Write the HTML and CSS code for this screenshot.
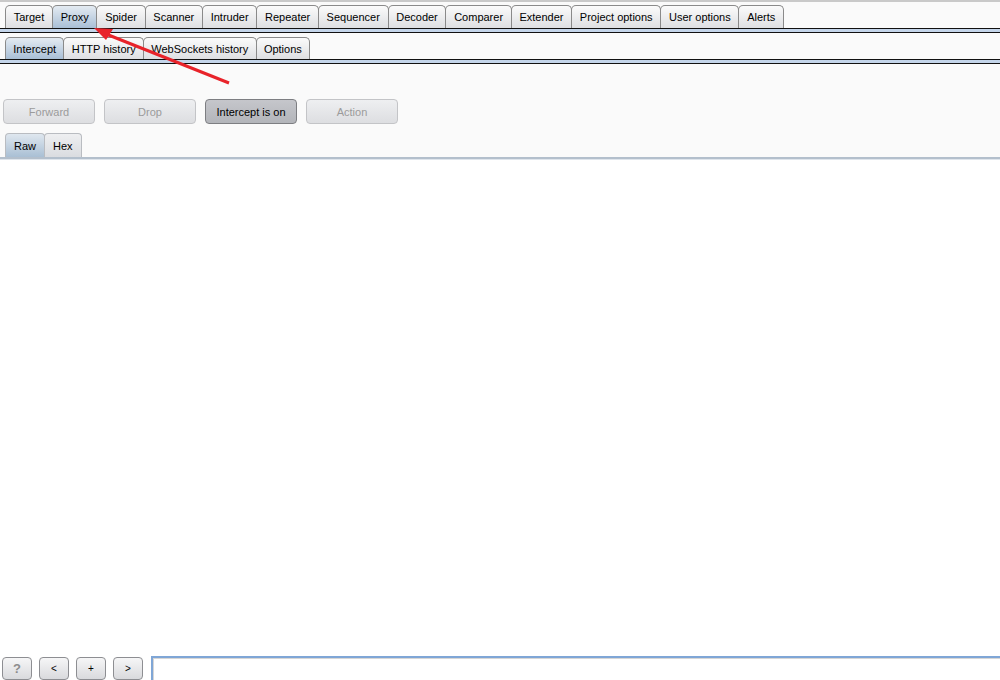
FILE: index.html
```html
<!DOCTYPE html>
<html lang="en">
<head>
  <meta charset="UTF-8" />
  <title>Burp Suite - Proxy</title>
  <link rel="stylesheet" href="styles.css">
</head>
<body>

<div class="window">
  <!-- Main tool tabs -->
  <div class="tabs main-tabs">
    <a class="tab">Target</a>
    <a class="tab active">Proxy</a>
    <a class="tab">Spider</a>
    <a class="tab">Scanner</a>
    <a class="tab">Intruder</a>
    <a class="tab">Repeater</a>
    <a class="tab">Sequencer</a>
    <a class="tab">Decoder</a>
    <a class="tab">Comparer</a>
    <a class="tab">Extender</a>
    <a class="tab">Project options</a>
    <a class="tab">User options</a>
    <a class="tab">Alerts</a>
  </div>
  <div class="tab-rule"></div>

  <!-- Proxy sub tabs -->
  <div class="tabs sub-tabs">
    <a class="tab active">Intercept</a>
    <a class="tab">HTTP history</a>
    <a class="tab">WebSockets history</a>
    <a class="tab">Options</a>
  </div>
  <div class="tab-rule"></div>

  <div class="intercept">
    <div class="actions">
      <button class="btn" disabled>Forward</button>
      <button class="btn" disabled>Drop</button>
      <button class="btn on">Intercept is on</button>
      <button class="btn" disabled>Action</button>
    </div>
    <div class="tabs view-tabs">
      <a class="tab active">Raw</a>
      <a class="tab">Hex</a>
    </div>
  </div>

  <div class="editor"></div>

  <div class="search-bar">
    <button class="small-btn q">?</button>
    <button class="small-btn">&lt;</button>
    <button class="small-btn">+</button>
    <button class="small-btn">&gt;</button>
    <input class="search" type="text">
  </div>
</div>

<!-- annotation arrow -->
<svg class="arrow" width="1000" height="680" viewBox="0 0 1000 680">
  <line x1="229" y1="83" x2="106" y2="34" stroke="#e8232a" stroke-width="3" />
  <polygon points="94,28 113,29 106,40" fill="#e8232a" />
</svg>

</body>
</html>
```

FILE: styles.css
```css
body {
  margin: 0;
  font-family: 'Liberation Sans', Arial, sans-serif;
  font-size: 11px;
  color: #000;
  background: #fff;
}

.window {
  display: flex;
  flex-direction: column;
  height: 680px;
  border-top: 2px solid #c9c9c9;
  box-sizing: border-box;
}

.tabs {
  display: flex;
  align-items: flex-end;
  padding-left: 5px;
  background: #fafafa;
}

.tab {
  display: flex;
  align-items: center;
  padding: 0 7.7px;
  border: 1px solid #8a8a8a;
  border-bottom: none;
  border-radius: 5px 5px 0 0;
  margin-right: -1px;
  background: linear-gradient(#fbfbfb, #dedfe2);
  white-space: nowrap;
  cursor: pointer;
}

.tab.active {
  background: linear-gradient(#e4ebf2, #a9bfd6);
}

.main-tabs {
  padding-top: 3px;
}

.main-tabs .tab {
  height: 22px;
}

.sub-tabs {
  padding-top: 4px;
}

.sub-tabs .tab {
  height: 21px;
  padding: 0 7.3px;
}

.tab-rule {
  height: 3px;
  border-top: 1px solid #111;
  border-bottom: 1px solid #111;
  background: #c4d5ea;
}

.intercept {
  background: #fafafa;
  padding-top: 35px;
}

.actions {
  display: flex;
  gap: 9px;
  padding-left: 3px;
}

.btn {
  width: 92px;
  height: 25px;
  font-family: inherit;
  font-size: 11px;
  border: 1px solid #c3c4c7;
  border-radius: 4px;
  background: linear-gradient(#eeeff1, #dddee1);
  color: #9b9b9b;
}

.btn.on {
  border-color: #7d7e82;
  background: linear-gradient(#c5c6cb, #b3b5ba);
  color: #000;
}

.view-tabs {
  margin-top: 9px;
  background: none;
}

.view-tabs .tab {
  height: 23px;
  padding: 0 8px;
  border-color: #b9bcc1;
  border-radius: 4px 4px 0 0;
  background: linear-gradient(#eeeff1, #dadce0);
}

.view-tabs .tab.active {
  background: linear-gradient(#dfe7ef, #a9bfd4);
}

.editor {
  flex: 1;
  border-top: 2px solid #b3bfcc;
  box-shadow: inset 0 1px 0 #dfe5ec;
  background: #fff;
}

.search-bar {
  display: flex;
  align-items: flex-end;
  gap: 7px;
  padding-left: 2px;
  height: 24px;
}

.small-btn {
  width: 30px;
  height: 23px;
  font-family: inherit;
  font-size: 10px;
  border: 1px solid #8d8e92;
  border-radius: 4px;
  background: linear-gradient(#f6f6f7, #d9dadd);
  color: #000;
  padding: 0;
}

.small-btn.q {
  color: #8c8c8c;
  font-weight: bold;
  font-size: 13px;
}

.search {
  flex: 1;
  height: 24px;
  margin-left: 1px;
  box-sizing: border-box;
  border: none;
  border-top: 2px solid #7fa6d6;
  border-left: 2px solid #7fa6d6;
  box-shadow: inset 1px 1px 0 #d6d6d6;
  background: #fff;
}

.arrow {
  position: absolute;
  top: 0;
  left: 0;
  pointer-events: none;
}
```
